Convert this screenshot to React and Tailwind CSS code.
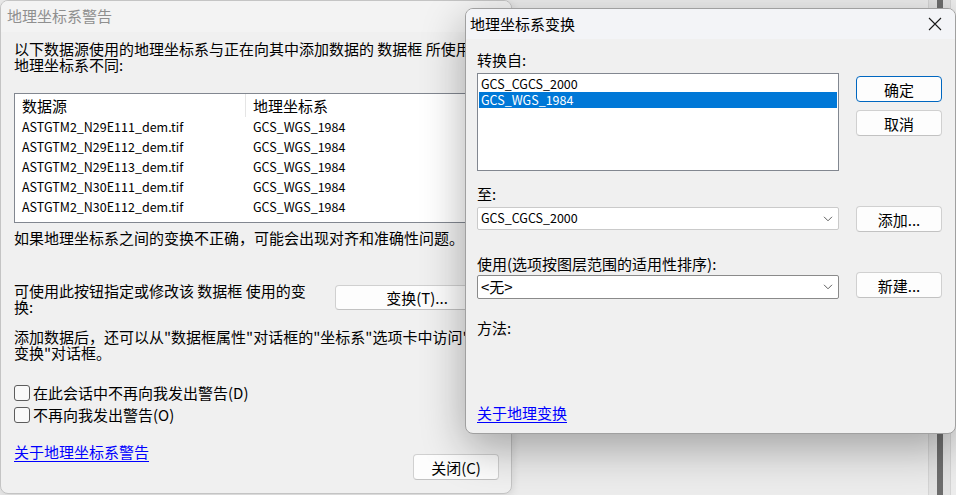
const rows = [
  'ASTGTM2_N29E111_dem.tif',
  'ASTGTM2_N29E112_dem.tif',
  'ASTGTM2_N29E113_dem.tif',
  'ASTGTM2_N30E111_dem.tif',
  'ASTGTM2_N30E112_dem.tif',
]

function Button({ children, primary, className = '' }) {
  return (
    <div
      className={
        'flex items-center justify-center rounded-[4px] border bg-[#fdfdfd] text-[15px] leading-none ' +
        (primary ? 'border-[#0067c0] ' : 'border-[#d0d0d0] border-b-[#c2c2c2] ') +
        className
      }
    >
      {children}
    </div>
  )
}

function Checkbox({ label }) {
  return (
    <div className="flex h-[22px] items-center gap-[3px]">
      <div className="h-[16px] w-[16px] rounded-[3px] border border-[#5c5c5c] bg-[#f9f9f9]" />
      <span className="leading-[16px]">{label}</span>
    </div>
  )
}

function Chevron() {
  return (
    <svg width="10" height="6" viewBox="0 0 10 6" className="mr-[5px]">
      <path d="M1 0.8 L5 4.8 L9 0.8" fill="none" stroke="#606060" strokeWidth="1" />
    </svg>
  )
}

function CloseIcon() {
  return (
    <svg width="14" height="14" viewBox="0 0 14 14">
      <path d="M1 1 L13 13 M13 1 L1 13" stroke="#1a1a1a" strokeWidth="1.1" fill="none" />
    </svg>
  )
}

function WarningWindow() {
  return (
    <div className="absolute left-0 top-0 flex h-[494px] w-[512px] flex-col overflow-hidden rounded-lg border border-[#c4c4c4] bg-[#f0f0f0] shadow-[0_2px_10px_rgba(0,0,0,0.12)]">
      <div className="flex h-[31px] shrink-0 items-center bg-[#f3f3f3] pl-[6px] text-[15px] text-[#8f8f8f]">
        地理坐标系警告
      </div>
      <div className="flex flex-col pl-[13px] pr-[12px] pt-[9px]">
        <p className="whitespace-nowrap leading-[16px]">
          以下数据源使用的地理坐标系与正在向其中添加数据的 数据框 所使用的
          <br />
          地理坐标系不同:
        </p>

        <div className="mt-[20px] h-[130px] w-[500px] border border-[#828790] bg-white">
          <div className="flex h-[23px] items-center">
            <div className="w-[230px] pl-[7px] leading-[16px]">数据源</div>
            <div className="h-full w-px bg-[#e5e5e5]" />
            <div className="pl-[7px] leading-[16px]">地理坐标系</div>
          </div>
          {rows.map((name) => (
            <div key={name} className="flex h-[20px] items-center text-[12.5px]">
              <div className="w-[231px] pl-[7px]">{name}</div>
              <div className="pl-[7px]">GCS_WGS_1984</div>
            </div>
          ))}
        </div>

        <p className="mt-[7px] whitespace-nowrap leading-[16px]">
          如果地理坐标系之间的变换不正确，可能会出现对齐和准确性问题。
        </p>

        <div className="mt-[37px] flex items-start">
          <p className="whitespace-nowrap leading-[16px]">
            可使用此按钮指定或修改该 数据框 使用的变
            <br />
            换:
          </p>
          <Button className="ml-auto mt-[2px] h-[25px] w-[164px]">变换(T)...</Button>
        </div>

        <p className="mt-[14px] whitespace-nowrap leading-[16px]">
          添加数据后，还可以从"数据框属性"对话框的"坐标系"选项卡中访问"
          <br />
          变换"对话框。
        </p>

        <div className="mt-[21px] flex flex-col">
          <Checkbox label="在此会话中不再向我发出警告(D)" />
          <Checkbox label="不再向我发出警告(O)" />
        </div>

        <div className="mt-[18px] flex items-start">
          <span className="leading-[16px] text-[#0000ff] underline underline-offset-[3px]">关于地理坐标系警告</span>
          <Button className="ml-auto mt-[10px] h-[26px] w-[86px]">关闭(C)</Button>
        </div>
      </div>
    </div>
  )
}

function TransformWindow() {
  return (
    <div className="absolute left-[465px] top-[8px] flex h-[426px] w-[491px] flex-col overflow-hidden rounded-lg border border-[#a0a0a0] bg-[#f0f0f0] shadow-[0_14px_44px_rgba(0,0,0,0.32)]">
      <div className="flex h-[30px] shrink-0 items-center justify-between bg-[#f3f4f7] pl-[4px] pr-[13px] text-[15px]">
        <span>地理坐标系变换</span>
        <CloseIcon />
      </div>
      <div className="flex pl-[11px]">
        <div className="flex w-[362px] flex-col pt-[13px]">
          <span className="leading-[16px]">转换自:</span>
          <div className="mt-[5px] h-[98px] border border-[#828790] bg-white px-px pt-[2px] text-[12.5px]">
            <div className="flex h-[16px] items-center pl-[2px]">GCS_CGCS_2000</div>
            <div className="flex h-[16px] items-center bg-[#0078d7] pl-[2px] text-white">GCS_WGS_1984</div>
          </div>

          <span className="mt-[15px] leading-[16px]">至:</span>
          <div className="mt-[5px] flex h-[23px] items-center justify-between rounded-[2px] border border-[#cacaca] bg-white pl-[3px] text-[12.5px]">
            <span>GCS_CGCS_2000</span>
            <Chevron />
          </div>

          <span className="mt-[26px] leading-[16px]">使用(选项按图层范围的适用性排序):</span>
          <div className="mt-[3px] flex h-[24px] items-center justify-between rounded-[2px] border border-[#8a8a8a] bg-white pl-[3px] text-[15px]">
            <span>&lt;无&gt;</span>
            <Chevron />
          </div>

          <span className="mt-[21px] leading-[16px]">方法:</span>

          <span className="mt-[69px] self-start leading-[16px] text-[#0000ff] underline underline-offset-[3px]">关于地理变换</span>
        </div>

        <div className="ml-[17px] flex w-[86px] flex-col">
          <Button primary className="mt-[37px] h-[26px]">确定</Button>
          <Button className="mt-[8px] h-[26px]">取消</Button>
          <Button className="mt-[70px] h-[26px]">添加...</Button>
          <Button className="mt-[40px] h-[26px]">新建...</Button>
        </div>
      </div>
    </div>
  )
}

export default function App() {
  return (
    <div className="relative h-[495px] w-[956px] overflow-hidden bg-[#ececec] font-['Noto_Sans_CJK_SC',sans-serif] text-[15px] text-black">
      {/* scrollbar of the app behind */}
      <div className="absolute bottom-0 left-[928px] top-0 flex w-[23px] justify-center border-x border-[#d4d4d4] bg-[#e2e2e2]">
        <div className="w-[6px] bg-[#6d6d6d]" />
      </div>
      <WarningWindow />
      <TransformWindow />
    </div>
  )
}
